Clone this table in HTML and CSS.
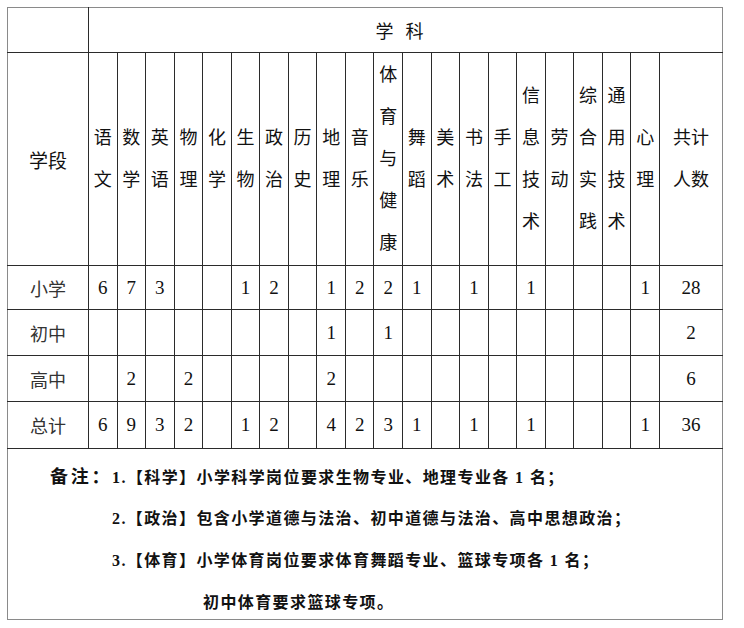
FILE: index.html
```html
<!DOCTYPE html>
<html lang="zh-CN">
<head>
<meta charset="utf-8">
<title>学科岗位表</title>
<link rel="stylesheet" href="styles.css">
</head>
<body>
<div class="page">
<table class="grid">
<colgroup>
<col class="c-stage">
<col class="c-subj"><col class="c-subj"><col class="c-subj"><col class="c-subj"><col class="c-subj">
<col class="c-subj"><col class="c-subj"><col class="c-subj"><col class="c-subj"><col class="c-subj">
<col class="c-subj"><col class="c-subj"><col class="c-subj"><col class="c-subj"><col class="c-subj">
<col class="c-subj"><col class="c-subj"><col class="c-subj"><col class="c-subj"><col class="c-subj">
<col class="c-total">
</colgroup>
<thead>
<tr class="r-top">
<th class="blank"></th>
<th colspan="21" class="subj-title">学科</th>
</tr>
<tr class="r-names">
<th class="stage-head">学段</th>
<th><div class="vt">语文</div></th>
<th><div class="vt">数学</div></th>
<th><div class="vt">英语</div></th>
<th><div class="vt">物理</div></th>
<th><div class="vt">化学</div></th>
<th><div class="vt">生物</div></th>
<th><div class="vt">政治</div></th>
<th><div class="vt">历史</div></th>
<th><div class="vt">地理</div></th>
<th><div class="vt">音乐</div></th>
<th><div class="vt">体育与健康</div></th>
<th><div class="vt">舞蹈</div></th>
<th><div class="vt">美术</div></th>
<th><div class="vt">书法</div></th>
<th><div class="vt">手工</div></th>
<th><div class="vt">信息技术</div></th>
<th><div class="vt">劳动</div></th>
<th><div class="vt">综合实践</div></th>
<th><div class="vt">通用技术</div></th>
<th><div class="vt">心理</div></th>
<th><div class="vt2">共计人数</div></th>
</tr>
</thead>
<tbody>
<tr class="r-a">
<td class="stage">小学</td>
<td class="n">6</td><td class="n">7</td><td class="n">3</td><td class="n"></td><td class="n"></td>
<td class="n">1</td><td class="n">2</td><td class="n"></td><td class="n">1</td><td class="n">2</td>
<td class="n">2</td><td class="n">1</td><td class="n"></td><td class="n">1</td><td class="n"></td>
<td class="n">1</td><td class="n"></td><td class="n"></td><td class="n"></td><td class="n">1</td>
<td class="tot">28</td>
</tr>
<tr class="r-b">
<td class="stage">初中</td>
<td class="n"></td><td class="n"></td><td class="n"></td><td class="n"></td><td class="n"></td>
<td class="n"></td><td class="n"></td><td class="n"></td><td class="n">1</td><td class="n"></td>
<td class="n">1</td><td class="n"></td><td class="n"></td><td class="n"></td><td class="n"></td>
<td class="n"></td><td class="n"></td><td class="n"></td><td class="n"></td><td class="n"></td>
<td class="tot">2</td>
</tr>
<tr class="r-c">
<td class="stage">高中</td>
<td class="n"></td><td class="n">2</td><td class="n"></td><td class="n">2</td><td class="n"></td>
<td class="n"></td><td class="n"></td><td class="n"></td><td class="n">2</td><td class="n"></td>
<td class="n"></td><td class="n"></td><td class="n"></td><td class="n"></td><td class="n"></td>
<td class="n"></td><td class="n"></td><td class="n"></td><td class="n"></td><td class="n"></td>
<td class="tot">6</td>
</tr>
<tr class="r-d">
<td class="stage">总计</td>
<td class="n">6</td><td class="n">9</td><td class="n">3</td><td class="n">2</td><td class="n"></td>
<td class="n">1</td><td class="n">2</td><td class="n"></td><td class="n">4</td><td class="n">2</td>
<td class="n">3</td><td class="n">1</td><td class="n"></td><td class="n">1</td><td class="n"></td>
<td class="n">1</td><td class="n"></td><td class="n"></td><td class="n"></td><td class="n">1</td>
<td class="tot">36</td>
</tr>
<tr class="r-note">
<td colspan="22" class="note-cell">
<div class="notes">
<p class="note-line l1"><span class="note-label">备注：</span>1.【科学】小学科学岗位要求生物专业、地理专业各 1 名；</p>
<p class="note-line l2">2.【政治】包含小学道德与法治、初中道德与法治、高中思想政治；</p>
<p class="note-line l3">3.【体育】小学体育岗位要求体育舞蹈专业、篮球专项各 1 名；</p>
<p class="note-line l4">初中体育要求篮球专项。</p>
</div>
</td>
</tr>
</tbody>
</table>
</div>
</body>
</html>
```

FILE: styles.css
```css
html, body {
  margin: 0;
  background: #ffffff;
}

.page {
  padding: 7px;
}

.grid {
  border-collapse: collapse;
  table-layout: fixed;
  width: 715px;
  font-family: "Liberation Serif", "Noto Sans CJK SC", serif;
  color: #111111;
}

.c-stage { width: 81px; }
.c-subj { width: 28.55px; }
.c-total { width: 63px; }

.grid th,
.grid td {
  border: 1px solid #2b2b2b;
  padding: 0;
  text-align: center;
  vertical-align: middle;
  font-weight: normal;
  overflow: visible;
}

/* softer outer frame */
.grid tr > :first-child { border-left-color: #8a8a8a; }
.grid tr > :last-child { border-right-color: #8a8a8a; }
.r-top > th { border-top-color: #8a8a8a; }
.r-note > td { border-bottom-color: #8a8a8a; }

.r-top > th { height: 44px; }
.r-names > th { height: 212px; }
.r-a > td { height: 43px; }
.r-b > td { height: 45px; }
.r-c > td { height: 45px; }
.r-d > td { height: 46px; }

.subj-title {
  font-size: 18px;
  letter-spacing: 12px;
  padding-left: 12px;
}

.stage-head {
  font-size: 19px;
}

.vt,
.vt2 {
  font-size: 18px;
  line-height: 42px;
  margin: 0 auto;
  word-break: break-all;
}

.vt { width: 18px; }
.vt2 { width: 36px; }

.stage {
  font-size: 18px;
  color: #333333;
}

.n {
  font-size: 19px;
  padding-top: 10px;
}

.tot {
  font-size: 19px;
}

.grid .note-cell {
  text-align: left;
  vertical-align: top;
}

.notes {
  height: 170px;
  padding-top: 7px;
  box-sizing: border-box;
}

.note-line {
  margin: 0;
  height: 42px;
  line-height: 42px;
  font-size: 16px;
  letter-spacing: 1.4px;
  font-weight: bold;
  color: #111111;
  white-space: nowrap;
}

.note-label {
  font-size: 18px;
  letter-spacing: 2.7px;
}

.l1 { padding-left: 42px; }
.l2 { padding-left: 104px; }
.l3 { padding-left: 104px; }
.l4 { padding-left: 195px; }
```
